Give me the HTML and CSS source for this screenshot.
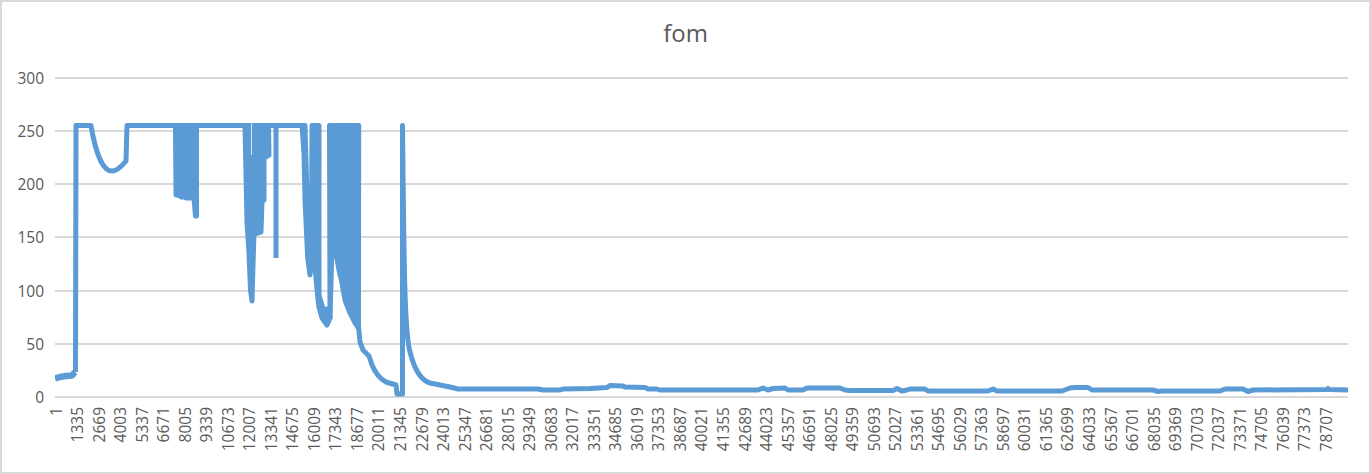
FILE: index.html
```html
<!DOCTYPE html>
<html lang="en">
<head>
<meta charset="utf-8">
<title>fom</title>
<link rel="stylesheet" href="styles.css">
</head>
<body>
<main class="chart">
  <h1 class="title">fom</h1>
  <div class="body">
    <div class="y-axis">
      <span>300</span><span>250</span><span>200</span><span>150</span><span>100</span><span>50</span><span>0</span>
    </div>
    <div class="plot">
      <div class="grid">
        <i></i><i></i><i></i><i></i><i></i><i></i><i></i>
      </div>
      <svg class="series" viewBox="55 77 1293 321" width="1293" height="321" aria-hidden="true">
        <path class="line start" d="M55 378.5 L60 377 L66 376 L72 375.5 L75 372"/>
        <path class="line" d="M75.5 372 L76 125.5 L91 125.5 C95 150 102 171 112 171 C117 171 122 166 126 161 L127 125.5 L302 125.5"/>
        <path class="block" d="M175.5 125.5 L176 195 L180 195.5 L181 197 L185 197 L186 198 L194 198 L195.5 216 L196.5 216 L196.5 125.5 Z"/>
        <path class="block" d="M245 125.5 L247 223 L249 253 L250.5 290 L252 301 L253 265 L254 234 L261 232 L262 202 L264 200 L264 158 L269 155 L268.5 125.5 Z"/>
        <path class="slit" d="M251.5 122 V155"/>
        <path class="line" d="M276 125.5 V258"/>
        <path class="block" d="M302 125.5 L304 153 L305 200 L307.7 258 L310 275 L311 265 L315 267 L318 300 L319 307 L322 318 L327 325 L330 318 L329.5 309 L323 309 L319 295 L319 125.5 L312 125.5 L311.5 232 L308 232 L305 125.5 Z"/>
        <path class="block" d="M329.5 125.5 L330 318 L332 246 L335 248 L339 270 L342 283 L345 300 L350 313 L355 323 L358.5 328 L358.7 125.5 Z"/>
        <path class="line" d="M358.5 326 L360 342 L363 350 L369 356 L372 365 C375 372 380 379 386 382 L396 385 L397 394 L402.5 394 L402.5 125.5 C404 250 404 330 410 352 C414 368 420 380 430 383 L440 385 L450 387 L458 389 L490 389 L538 389 L543 390 L560 390 L563 389 L590 388.5 L607 387.5 L610 385.5 L623 386 L625 387 L645 387.5 L648 389 L657 389 L660 390 L758 390 L763 388 L768 390 L773 388.5 L785 388 L788 390 L803 390 L807 388 L840 388 L845 390 L850 390.5 L893 390.5 L897 388.5 L902 391 L907 390 L910 389 L925 389 L928 391 L988 391 L993 389 L997 391 L1062 391 L1070 388 L1075 387.5 L1088 387.5 L1092 390 L1153 390 L1158 391.5 L1162 391 L1220 391 L1225 389 L1243 389 L1248 391.5 L1253 390 L1327 389.5 L1328 388.5 L1329 389.5 L1348 390"/>
      </svg>
    </div>
  </div>
  <div class="x-axis">
    <span>1</span><span>1335</span><span>2669</span><span>4003</span><span>5337</span><span>6671</span><span>8005</span><span>9339</span><span>10673</span><span>12007</span><span>13341</span><span>14675</span><span>16009</span><span>17343</span><span>18677</span><span>20011</span><span>21345</span><span>22679</span><span>24013</span><span>25347</span><span>26681</span><span>28015</span><span>29349</span><span>30683</span><span>32017</span><span>33351</span><span>34685</span><span>36019</span><span>37353</span><span>38687</span><span>40021</span><span>41355</span><span>42689</span><span>44023</span><span>45357</span><span>46691</span><span>48025</span><span>49359</span><span>50693</span><span>52027</span><span>53361</span><span>54695</span><span>56029</span><span>57363</span><span>58697</span><span>60031</span><span>61365</span><span>62699</span><span>64033</span><span>65367</span><span>66701</span><span>68035</span><span>69369</span><span>70703</span><span>72037</span><span>73371</span><span>74705</span><span>76039</span><span>77373</span><span>78707</span>
  </div>
</main>
</body>
</html>
```
FILE: styles.css
```css
* { box-sizing: border-box; }
html, body { margin: 0; padding: 0; background: #fff; }
.chart {
  width: 1371px;
  height: 474px;
  border: 2px solid #d9d9d9;
  overflow: hidden;
  font-family: "Open Sans", "Liberation Sans", sans-serif;
  color: #595959;
  background: #fff;
}
.title {
  margin: 0;
  padding-top: 15px;
  height: 75px;
  font-size: 24px;
  line-height: 32px;
  font-weight: 400;
  text-align: center;
}
.body { display: flex; height: 321px; }
.y-axis {
  width: 53px;
  padding-right: 11px;
  display: flex;
  flex-direction: column;
  justify-content: space-between;
  align-items: flex-end;
  font-size: 15.5px;
}
.y-axis span { height: 2px; line-height: 2px; }
.plot { position: relative; width: 1293px; }
.grid {
  height: 100%;
  display: flex;
  flex-direction: column;
  justify-content: space-between;
}
.grid i { display: block; height: 2px; background: #d9d9d9; }
.series { position: absolute; top: 0; left: 0; display: block; }
.line, .block {
  stroke: #5b9bd5;
  stroke-width: 5;
  stroke-linejoin: round;
}
.line { fill: none; }
.line.start { stroke-width: 6.5; }
.block { fill: #5b9bd5; }
.slit { fill: none; stroke: #d5e4f3; stroke-width: 1; }
.x-axis {
  display: flex;
  align-items: flex-start;
  margin-left: 43.5px;
  padding-top: 9px;
  font-size: 15.5px;
}
.x-axis span {
  flex: 0 0 21.54px;
  width: 21.54px;
  line-height: 21.54px;
  writing-mode: vertical-rl;
  transform: rotate(180deg);
}
```
